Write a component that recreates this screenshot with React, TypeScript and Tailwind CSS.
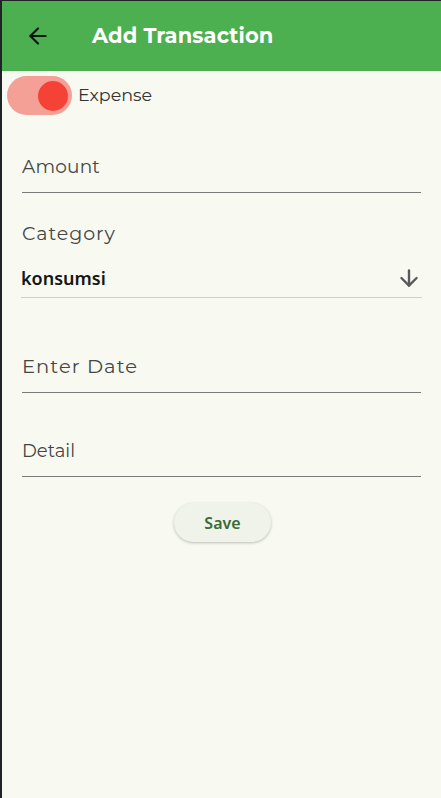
import { ArrowLeft, ArrowDown } from 'lucide-react';

const mont = "font-['Montserrat','Lato',sans-serif]";

function Field({ label, className }: { label: string; className: string }) {
  return (
    <div className="ml-[20px] mr-[20px] border-b-[1.5px] border-[#7a7a78] pb-[13px]">
      <span className={`leading-[24px] text-[#454545] ${mont} ${className}`}>{label}</span>
    </div>
  );
}

export default function App() {
  return (
    <div className="w-[441px] h-[798px] bg-[#1f2326] pl-[2px] pt-px">
      <div className="h-full bg-[#f8faf2] flex flex-col">
        <header className="h-[70px] bg-[#4caf50] flex items-center">
          <ArrowLeft className="ml-[23px] w-[26px] h-[26px] text-[#111]" strokeWidth={2} />
          <h1 className={`ml-[41px] text-[21px] font-bold text-white tracking-[0.005em] ${mont}`}>
            Add Transaction
          </h1>
        </header>

        <div className="flex items-center mt-[5px] ml-[5px]">
          <div className="w-[65px] h-[39px] rounded-full bg-[#f5a096] flex items-center justify-end pr-[4px]">
            <div className="w-[30px] h-[30px] rounded-full bg-[#f44336]" />
          </div>
          <span className={`ml-[6px] text-[17.5px] text-[#333] ${mont}`}>Expense</span>
        </div>

        <div className="mt-[40px]">
          <Field label="Amount" className="text-[18.5px] tracking-[0.01em]" />
        </div>

        <div className="mt-[29px] ml-[20px]">
          <span className={`text-[19px] leading-[24px] tracking-[0.05em] text-[#454545] ${mont}`}>
            Category
          </span>
        </div>
        <div className="mt-[19px] ml-[19px] mr-[19px] border-b border-[#cfcfcb] pb-[6px] flex items-center justify-between">
          <span className="text-[18px] leading-[24px] font-semibold text-[#151515] font-['Noto_Sans',sans-serif]">
            konsumsi
          </span>
          <ArrowDown className="w-[26px] h-[26px] text-[#5a5a5a]" strokeWidth={2.2} />
        </div>

        <div className="mt-[56px]">
          <Field label="Enter Date" className="text-[19.5px] tracking-[0.055em]" />
        </div>
        <div className="mt-[46px]">
          <Field label="Detail" className="text-[18px]" />
        </div>

        <div className="flex justify-center mt-[26px]">
          <button className="w-[97px] h-[39px] ml-[2px] rounded-full bg-[#eff3ea] shadow-[0_1px_3px_rgba(0,0,0,0.25)] text-[16px] font-semibold text-[#3b6a3a] font-['Noto_Sans',sans-serif]">
            Save
          </button>
        </div>
      </div>
    </div>
  );
}
